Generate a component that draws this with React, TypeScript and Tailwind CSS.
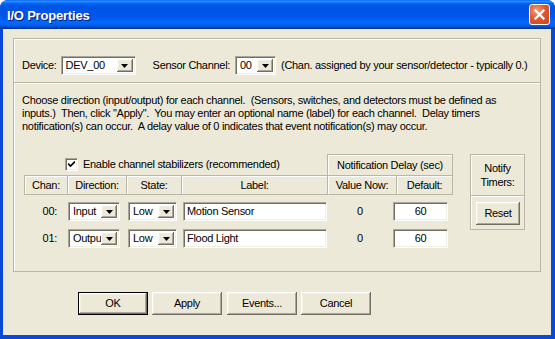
import React from "react";

const sunken =
  "border border-t-[#ACA899] border-l-[#ACA899] border-r-white border-b-white shadow-[inset_1px_1px_0_#716F64,inset_-1px_-1px_0_#F1EFE2]";
const raised =
  "bg-[#ECE9D8] shadow-[inset_-1px_-1px_0_#716F64,inset_1px_1px_0_#fff,inset_-2px_-2px_0_#ACA899,inset_2px_2px_0_#F1EFE2]";
const etched = "border-[#B9B6A6] shadow-[inset_1px_1px_0_#fff]";

function Arrow() {
  return (
    <svg width="7" height="4" viewBox="0 0 7 4">
      <path d="M0 0h7L3.5 4z" fill="#000" />
    </svg>
  );
}

function Combo({ value, w }: { value: string; w: string }) {
  return (
    <div className={`${w} h-[19px] bg-white flex items-stretch p-[2px] ${sunken}`}>
      <div className="flex-1 pl-[2px] leading-[13px] flex items-center overflow-hidden whitespace-nowrap">
        {value}
      </div>
      <div className={`w-[16px] flex items-center justify-center ${raised}`}>
        <Arrow />
      </div>
    </div>
  );
}

function TextInput({ value, w, center }: { value: string; w: string; center?: boolean }) {
  return (
    <div
      className={`${w} h-[19px] bg-white flex items-center px-[3px] ${sunken} ${
        center ? "justify-center" : ""
      }`}
    >
      {value}
    </div>
  );
}

function Button({ label, def, w, extra }: { label: string; def?: boolean; w: string; extra?: string }) {
  return (
    <div className={`${w} h-[23px] ${def ? "border border-black" : ""} ${extra ?? ""}`}>
      <div className={`w-full h-full flex items-center justify-center ${raised}`}>{label}</div>
    </div>
  );
}

export default function App() {
  return (
    <div className="w-[555px] h-[339px] flex flex-col bg-[#0A48DA] rounded-t-[8px] overflow-hidden font-['Liberation_Sans',Arial,sans-serif] text-[11px] tracking-[-0.3px] text-black">
      {/* title bar */}
      <div className="h-[29px] shrink-0 flex items-center justify-between pl-[7px] pr-[5px] bg-[linear-gradient(180deg,#0058EE_0%,#3593FF_4%,#288EFF_6%,#127DFF_8%,#036FFC_10%,#0262EE_14%,#0057E5_20%,#0054E3_24%,#0055EB_56%,#005BF5_66%,#026AFE_76%,#0062EF_86%,#0052D6_92%,#0040AB_96%,#003092_100%)]">
        <div className="pt-[2px] text-white font-bold text-[13px] tracking-[-0.2px] [text-shadow:1px_1px_0_#0A1E6E]">
          I/O Properties
        </div>
        <div className="w-[21px] h-[21px] rounded-[3px] border border-white flex items-center justify-center bg-[radial-gradient(circle_at_35%_30%,#F4A080_0%,#E5582E_45%,#CC4218_100%)]">
          <svg width="11" height="11" viewBox="0 0 11 11">
            <path d="M1.5 1.5L9.5 9.5M9.5 1.5L1.5 9.5" stroke="#fff" strokeWidth="2.2" strokeLinecap="square" />
          </svg>
        </div>
      </div>

      {/* body */}
      <div className="flex-1 ml-[3px] mr-[4px] mb-[4px] bg-[#ECE9D8] pt-[9px] pl-[10px] flex flex-col">
        {/* group box */}
        <div className={`w-[528px] h-[234px] border ${etched} flex flex-col`}>
          {/* device row */}
          <div className="h-[44px] shrink-0 flex items-start pt-[17px] pl-[8px] border-b border-[#B9B6A6] shadow-[0_1px_0_#fff] whitespace-nowrap">
            <div className="flex items-center">
              <span>Device:</span>
              <div className="ml-[4px]">
                <Combo value="DEV_00" w="w-[75px]" />
              </div>
              <span className="ml-[17px]">Sensor Channel:</span>
              <div className="ml-[5px]">
                <Combo value="00" w="w-[41px]" />
              </div>
              <span className="ml-[5px]">(Chan. assigned by your sensor/detector - typically 0.)</span>
            </div>
          </div>

          {/* paragraph */}
          <div className="pl-[8px] pt-[11px] leading-[13px] whitespace-pre">
            {"Choose direction (input/output) for each channel.  (Sensors, switches, and detectors must be defined as"}
            <br />
            {"inputs.)  Then, click \"Apply\".  You may enter an optional name (label) for each channel.  Delay timers"}
            <br />
            {"notification(s) can occur.  A delay value of 0 indicates that event notification(s) may occur."}
          </div>

          {/* table */}
          <div className="mt-[21px] ml-[10px] flex">
            <div className="w-[429px] flex flex-col">
              {/* row A */}
              <div className="h-[21px] flex">
                <div className="w-[303px] flex items-center pl-[41px]">
                  <div className={`w-[13px] h-[13px] bg-white flex items-center justify-center ${sunken}`}>
                    <svg width="7" height="7" viewBox="0 0 7 7">
                      <path d="M0 2.5L2.5 5L7 0.5" stroke="#000" strokeWidth="1.6" fill="none" />
                    </svg>
                  </div>
                  <span className="ml-[5px]">Enable channel stabilizers (recommended)</span>
                </div>
                <div className={`w-[126px] border-l border-t border-r ${etched} flex items-center justify-center`}>
                  Notification Delay (sec)
                </div>
              </div>
              {/* row B */}
              <div className="h-[20px] flex">
                <div className={`w-[43px] border-l border-t border-b ${etched} flex items-center justify-center`}>Chan:</div>
                <div className={`w-[59px] border-l border-t border-b ${etched} flex items-center justify-center`}>Direction:</div>
                <div className={`w-[55px] border-l border-t border-b ${etched} flex items-center justify-center`}>State:</div>
                <div className={`w-[146px] border-l border-t border-b ${etched} flex items-center justify-center`}>Label:</div>
                <div className={`w-[69px] border-l border-t border-b ${etched} flex items-center justify-center`}>Value Now:</div>
                <div className={`w-[57px] border-l border-t border-b border-r ${etched} flex items-center justify-center`}>Default:</div>
              </div>
              {/* data rows */}
              {[
                { ch: "00:", dir: "Input", label: "Motion Sensor", mt: "mt-[7px]" },
                { ch: "01:", dir: "Outpu", label: "Flood Light", mt: "mt-[8px]" },
              ].map((r) => (
                <div key={r.ch} className={`h-[19px] flex items-center ${r.mt}`}>
                  <div className="w-[43px] text-right pr-[10px]">{r.ch}</div>
                  <div className="w-[59px] pl-[1px]">
                    <Combo value={r.dir} w="w-[52px]" />
                  </div>
                  <div className="w-[55px] pl-[2px]">
                    <Combo value="Low" w="w-[49px]" />
                  </div>
                  <div className="w-[146px] pl-[2px]">
                    <TextInput value={r.label} w="w-[144px]" />
                  </div>
                  <div className="w-[66px] text-center">0</div>
                  <TextInput value="60" w="w-[55px]" center />
                </div>
              ))}
            </div>
            {/* notify column */}
            <div className="ml-[17px] w-[55px] flex flex-col">
              <div className={`h-[41px] border-l border-t border-r ${etched} flex flex-col items-center pt-[6px] leading-[14px]`}>
                <span>Notify</span>
                <span>Timers:</span>
              </div>
              <div className={`h-[35px] border ${etched} pt-[6px] pl-[5px]`}>
                <Button label="Reset" w="w-[44px]" />
              </div>
            </div>
          </div>
        </div>

        {/* buttons */}
        <div className="mt-[20px] ml-[65px] flex gap-[4px]">
          <Button label="OK" def w="w-[70px]" />
          <Button label="Apply" w="w-[70px]" />
          <Button label="Events..." w="w-[70px]" extra="ml-[1px]" />
          <Button label="Cancel" w="w-[70px]" />
        </div>
      </div>
    </div>
  );
}
